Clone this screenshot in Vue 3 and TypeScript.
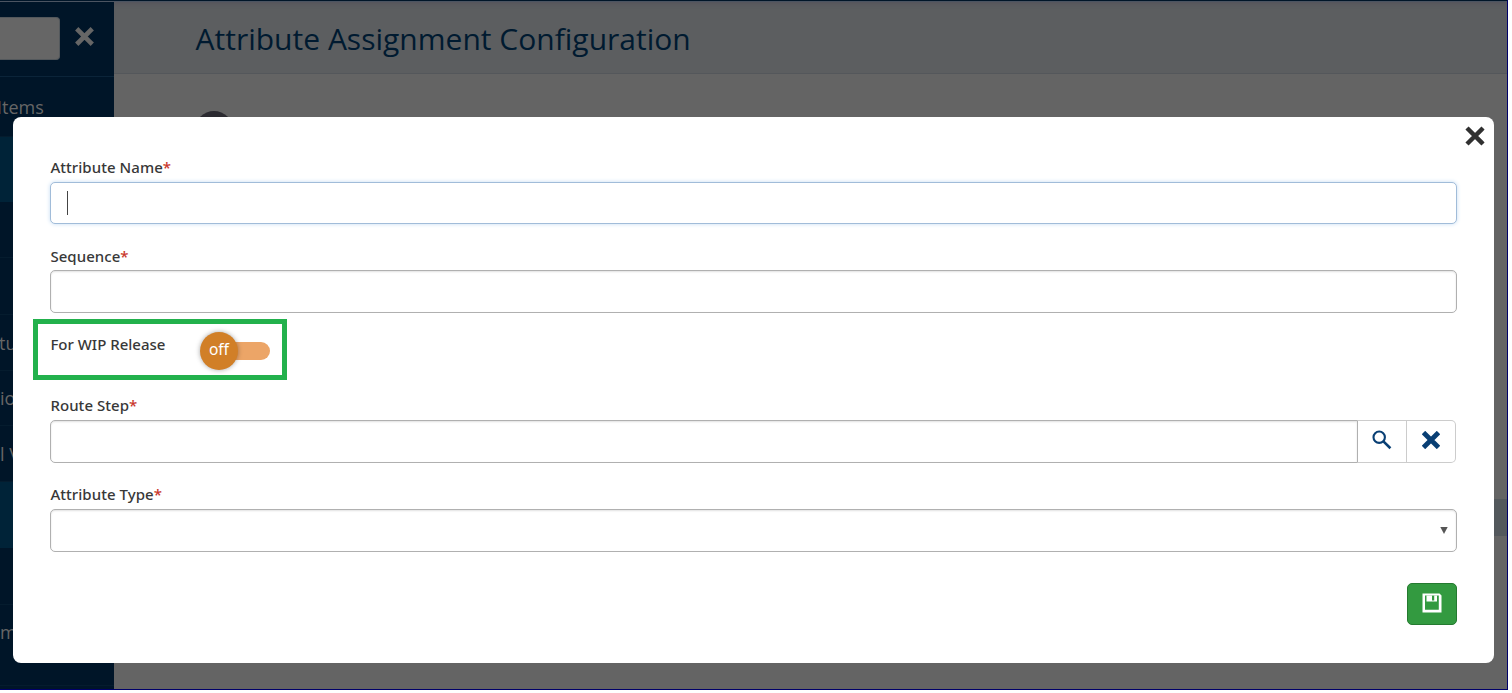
<script setup lang="ts">
import { ref } from 'vue'

interface NavRow {
  label: string
  height: number
  shift: number
  active?: boolean
}

const rows: NavRow[] = [
  { label: 'Items', height: 60, shift: -3 },
  { label: '', height: 65, shift: 0, active: true },
  { label: '', height: 56, shift: 0 },
  { label: '', height: 57, shift: 0 },
  { label: 'tu', height: 56, shift: -1 },
  { label: 'io', height: 55, shift: 0 },
  { label: 'l V', height: 56, shift: 0 },
  { label: '', height: 66, shift: 0, active: true },
  { label: '', height: 57, shift: 0 },
  { label: 'm', height: 81, shift: 0 },
]

const attributeName = ref('')
const sequence = ref('')
const routeStep = ref('')
const attributeType = ref('')
const cross = 'M3.2 3.2 L14.8 14.8 M14.8 3.2 L3.2 14.8'
</script>

<template>
  <div class="screen">
    <div class="topbar"></div>
    <div class="body">
      <aside class="sidebar">
        <div class="search">
          <div class="search-box"></div>
          <svg class="search-close" viewBox="0 0 18 18"><path :d="cross" /></svg>
        </div>
        <div
          v-for="(row, i) in rows"
          :key="i"
          class="nav-row"
          :class="{ active: row.active }"
          :style="{ height: row.height + 'px' }"
        >
          <span :style="{ marginLeft: row.shift + 'px' }">{{ row.label }}</span>
        </div>
      </aside>
      <main class="main">
        <header class="header"><h1>Attribute Assignment Configuration</h1></header>
        <div class="content">
          <div class="round"></div>
          <div class="band"></div>
        </div>
      </main>
    </div>

    <section class="modal">
      <button class="close" type="button" aria-label="Close">
        <svg viewBox="0 0 18 18"><path :d="cross" /></svg>
      </button>
      <div class="field name">
        <label>Attribute Name<i>*</i></label>
        <div class="input focused">{{ attributeName }}<span class="caret"></span></div>
      </div>
      <div class="field sequence">
        <label>Sequence<i>*</i></label>
        <div class="input">{{ sequence }}</div>
      </div>
      <div class="release">
        <label>For WIP Release</label>
        <div class="switch">
          <div class="knob">off</div>
          <div class="track"></div>
        </div>
      </div>
      <div class="field route">
        <label>Route Step<i>*</i></label>
        <div class="group">
          <div class="input">{{ routeStep }}</div>
          <button class="addon" type="button" aria-label="Search">
            <svg class="find" viewBox="0 0 20 20"><circle cx="7.2" cy="7.2" r="5.7" /><path d="M11.4 11.4 L18.4 18.2" /></svg>
          </button>
          <button class="addon last" type="button" aria-label="Clear">
            <svg class="clear" viewBox="0 0 18 18"><path :d="cross" /></svg>
          </button>
        </div>
      </div>
      <div class="field type">
        <label>Attribute Type<i>*</i></label>
        <div class="input select">
          {{ attributeType }}
          <svg viewBox="0 0 8 7"><path d="M0.3 0 H7.7 L4 7 Z" /></svg>
        </div>
      </div>
      <div class="actions">
        <button class="save" type="button" aria-label="Save">
          <svg viewBox="0 0 20 20">
            <path fill-rule="evenodd" d="M0.5 0.5 H17.5 L19.5 2.5 V19.5 H0.5 Z M3 2.5 V16.8 H16.8 V2.5 Z" />
            <path d="M4.5 2.4 H10 V7.4 H12.2 V2.4 H15 V8.5 H4.5 Z" />
          </svg>
        </button>
      </div>
    </section>
  </div>
</template>

<style>
body { background: #fff; }
</style>

<style scoped>
* { box-sizing: border-box; }
.screen {
  position: relative;
  width: 1508px;
  height: 690px;
  overflow: hidden;
  display: flex;
  flex-direction: column;
  background: #646464;
  border-right: 1px solid #00006a;
  border-bottom: 1px solid #00006a;
  font-family: "Noto Sans", "Open Sans", sans-serif;
}
.topbar { height: 2px; flex: none; background: #001528; border-bottom: 1px solid #4b5461; }
.body { flex: 1; display: flex; min-height: 0; }
.sidebar { width: 114px; background: #001528; overflow: hidden; }
.search { height: 75px; display: flex; border-bottom: 1px solid #0b2439; }
.search-box { width: 60px; height: 43px; margin-top: 15px; background: #666; border: 1px solid #53585c; border-left: 0; border-radius: 0 4px 4px 0; }
.search-close { width: 19px; height: 19px; margin: 24.5px 0 0 14.5px; }
.search-close path, .close path, .clear path { stroke: #666; stroke-width: 4.4; stroke-linecap: square; fill: none; }
.nav-row { display: flex; align-items: center; border-bottom: 1px solid #051c2e; color: #666; font: 400 18px "Open Sans", "Noto Sans", sans-serif; white-space: pre; }
.nav-row:last-child { padding-bottom: 26px; }
.nav-row.active { background: #002338; border-bottom-color: #002338; }
.main { flex: 1; display: flex; flex-direction: column; }
.header { height: 72px; flex: none; background: #5c5e60; border-bottom: 1px solid #54575b; box-shadow: inset 0 5px 4px -3px #55555d; padding-left: 81.5px; display: flex; align-items: center; }
h1 { margin: 3px 0 0; font: 400 30px/40px "Open Sans", "Noto Sans", sans-serif; letter-spacing: 0.01px; color: #001a30; white-space: nowrap; }
.content { flex: 1; display: flex; flex-direction: column; }
.round { width: 38px; height: 38px; margin: 37px 0 0 81px; border-radius: 50%; background: #2b2a30; flex: none; }
.band { height: 37px; margin: 350px 0 0 81px; background: #53585c; }
.modal {
  position: absolute;
  left: 13px;
  top: 117px;
  width: 1481px;
  height: 546px;
  padding: 41px 37px 0;
  background: #fff;
  border-radius: 8px;
}
label { display: block; height: 24px; padding-left: 0.4px; font-size: 15px; line-height: 18px; font-weight: 500; letter-spacing: 0.05px; color: #383838; white-space: nowrap; }
.sequence label { line-height: 20px; }
label i { font-style: normal; color: #c9372c; }
.input { height: 43px; background: #fff; border: 1px solid #b0b0b0; border-radius: 5px; box-shadow: inset 0 1px 2px rgba(0, 0, 0, .12); }
.focused { height: 42px; border-color: #a1bcd9; box-shadow: 0 0 4px #c5dcf3; padding: 8px 16px; }
.caret { display: block; width: 1px; height: 24px; background: #444; }
.name { height: 88px; }
.sequence { height: 75px; }
.release { display: flex; width: 254px; height: 61px; margin-left: -17px; margin-top: -2px; padding: 10px 0 0 12px; border: 5px solid #22b14c; }
.release label { padding-top: 1px; width: 150px; letter-spacing: 0; }
.switch { display: flex; align-items: center; height: 38px; margin-top: -2px; }
.knob { z-index: 1; width: 38px; height: 38px; border-radius: 50%; background: #d17f27; color: #fff; font: 400 15.5px/35px "Noto Sans", sans-serif; text-align: center; box-shadow: 0 0 5px rgba(0, 0, 0, .35); }
.track { width: 42px; height: 18px; margin: 0 0 0 -10px; background: #eca567; border-radius: 0 9px 9px 0; }
.route { height: 89px; margin-top: 16px; }
.group { display: flex; width: 1406px; }
.group .input { flex: 1; border-radius: 5px 0 0 5px; }
.addon { width: 49px; height: 43px; padding: 0; border: 1px solid #ccc; border-left: 0; background: #fff; display: flex; align-items: center; justify-content: center; }
.last { border-radius: 0 5px 5px 0; }
.find { width: 20px; height: 20px; margin: -3px 0 0; }
.find circle, .find path { fill: none; stroke: #093f74; stroke-width: 2.1; }
.find path { stroke-width: 2.6; }
.clear { width: 18px; height: 18px; margin-top: -3px; }
.clear path { stroke: #093f74; stroke-width: 4.8; }
.select { display: flex; align-items: center; justify-content: flex-end; padding-right: 8px; }
.select svg { width: 8px; height: 7px; fill: #555; }
.actions { display: flex; justify-content: flex-end; margin-top: 31px; }
.save { width: 50px; height: 42px; padding: 0 0 2px; border: 1px solid #257a30; border-radius: 5px; background: #339a40; display: flex; align-items: center; justify-content: center; }
.save svg { width: 20px; height: 20px; fill: #fff; }
.close { position: absolute; left: 1452px; top: 9px; width: 20px; height: 20px; padding: 0; border: 0; background: none; }
.close svg { display: block; width: 20px; height: 20px; }
.close path { stroke: #303030; stroke-width: 4; }
</style>
